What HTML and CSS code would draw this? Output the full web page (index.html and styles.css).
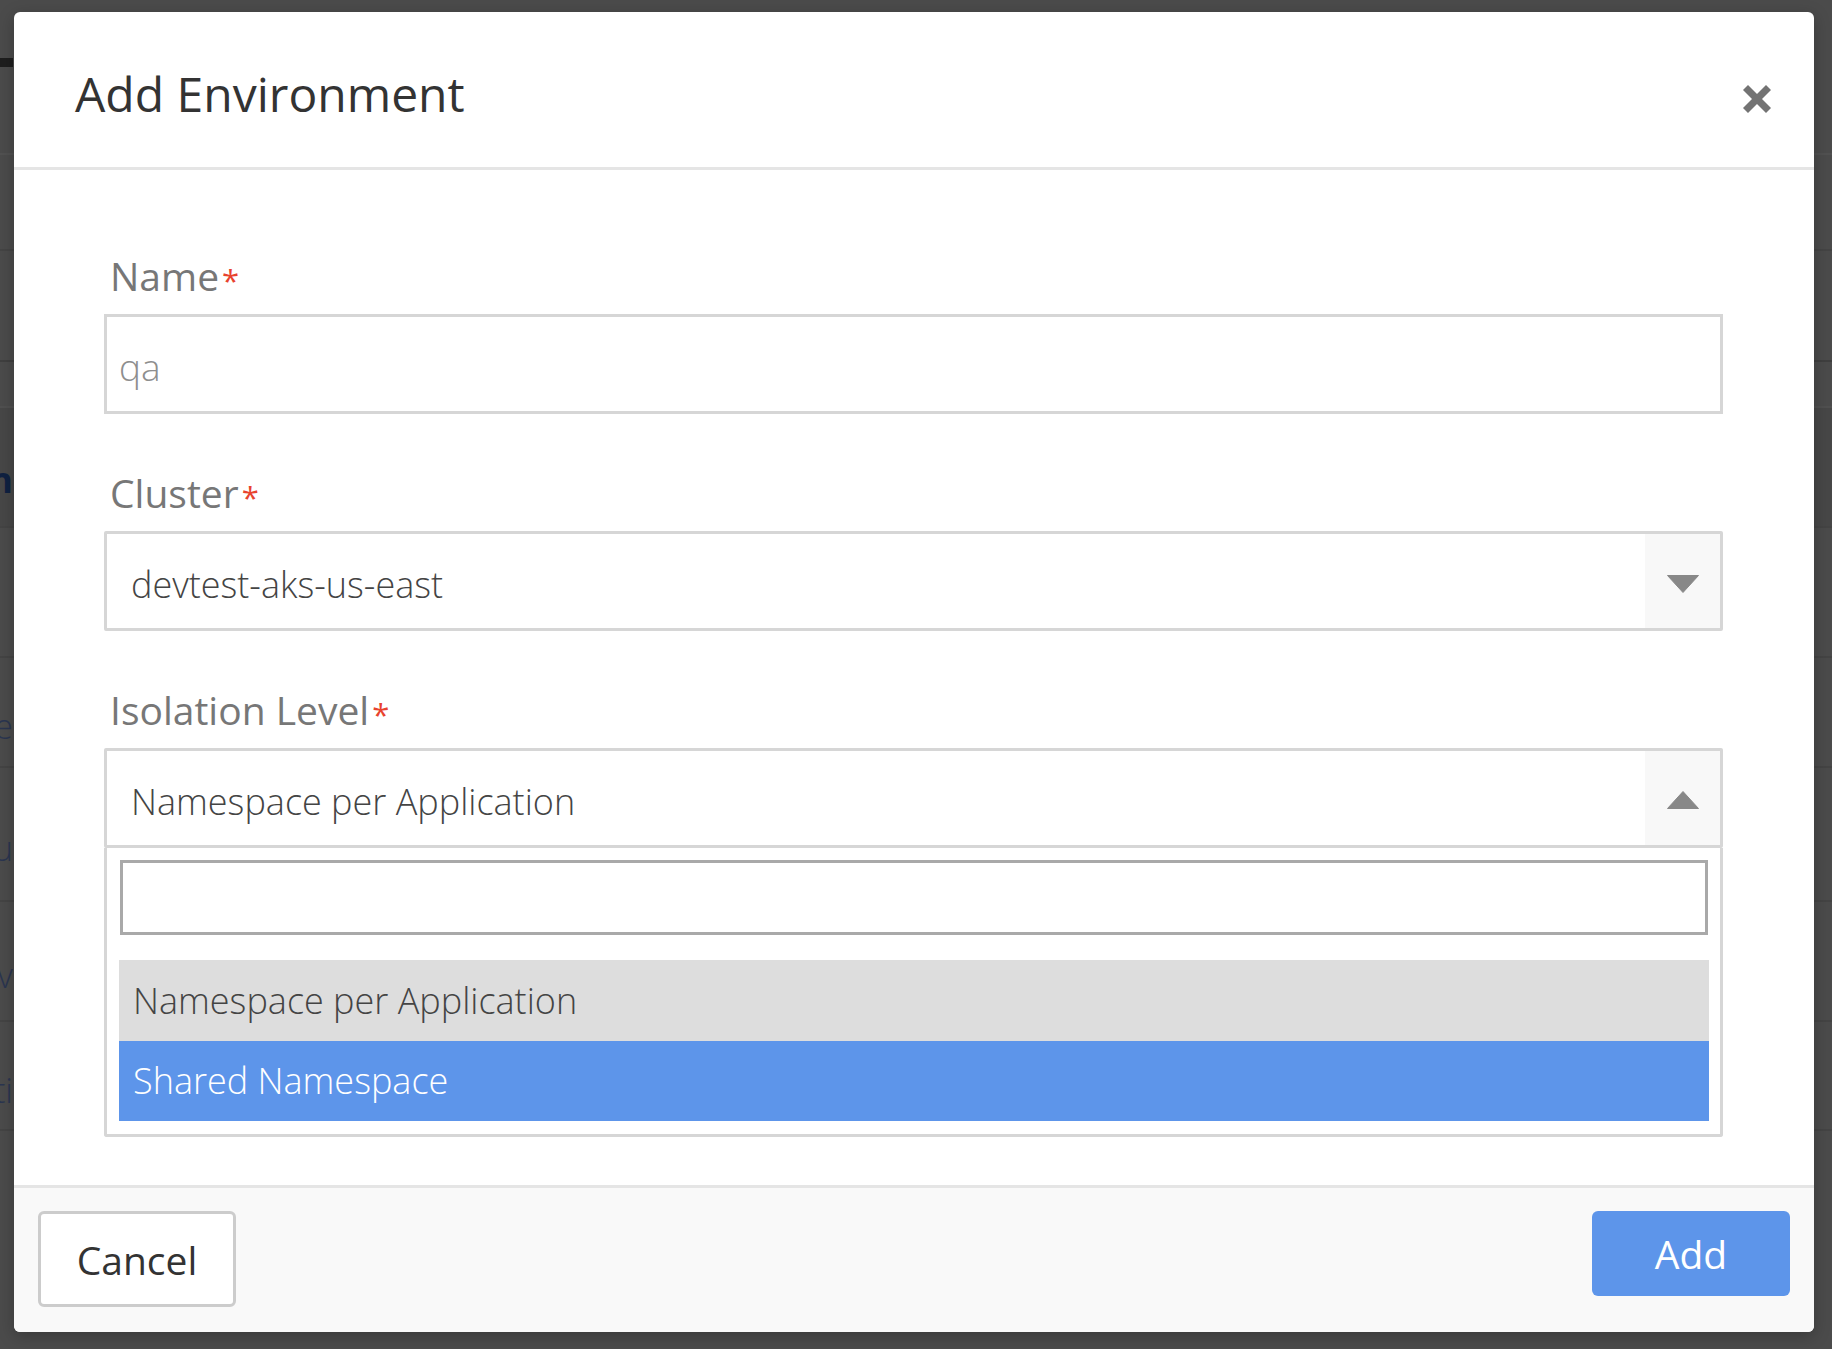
FILE: index.html
```html
<!DOCTYPE html>
<html lang="en">
<head>
<meta charset="utf-8">
<title>Add Environment</title>
<link rel="stylesheet" href="styles.css">
</head>
<body>
<div class="page">
  <div class="row row-top"><div class="frag frag-top"><span class="logo-edge"></span></div></div>
  <div class="row row-a"><div class="frag"></div></div>
  <div class="row row-b"><div class="frag"></div></div>
  <div class="row row-c"><div class="frag"></div></div>
  <div class="row row-d"><div class="frag frag-bold">Environmen</div></div>
  <div class="row row-e"><div class="frag"></div></div>
  <div class="row row-f"><div class="frag">Name</div></div>
  <div class="row row-g"><div class="frag">devtest-aks-u</div></div>
  <div class="row row-h"><div class="frag">Shared Namespace per Applicv</div></div>
  <div class="row row-i"><div class="frag">Isolati</div></div>
  <div class="row row-j"><div class="frag"></div></div>
</div>

<div class="modal" role="dialog" aria-labelledby="modal-title">
  <div class="modal-header">
    <h2 class="modal-title" id="modal-title">Add Environment</h2>
    <button class="close-btn" type="button" aria-label="Close">
      <svg width="28" height="28" viewBox="0 0 28 28" aria-hidden="true">
        <line x1="2.5" y1="2.5" x2="25.5" y2="25.5" stroke="#737373" stroke-width="7"/>
        <line x1="25.5" y1="2.5" x2="2.5" y2="25.5" stroke="#737373" stroke-width="7"/>
      </svg>
    </button>
  </div>

  <div class="modal-body">
    <div class="form-group">
      <label class="field-label">Name<span class="req">*</span></label>
      <div class="text-input">qa</div>
    </div>

    <div class="form-group">
      <label class="field-label">Cluster<span class="req">*</span></label>
      <div class="select">
        <div class="select-value">devtest-aks-us-east</div>
        <div class="select-arrow">
          <svg width="32" height="18" viewBox="0 0 32 18" aria-hidden="true"><polygon points="0.5,0.5 31.5,0.5 16,17.5" fill="#888" stroke="#888" stroke-width="1" stroke-linejoin="round"/></svg>
        </div>
      </div>
    </div>

    <div class="form-group last">
      <label class="field-label">Isolation Level<span class="req">*</span></label>
      <div class="select open">
        <div class="select-value">Namespace per Application</div>
        <div class="select-arrow">
          <svg width="32" height="18" viewBox="0 0 32 18" aria-hidden="true"><polygon points="0.5,17.5 31.5,17.5 16,0.5" fill="#888" stroke="#888" stroke-width="1" stroke-linejoin="round"/></svg>
        </div>
      </div>
      <div class="dropdown">
        <div class="dropdown-search"></div>
        <ul class="options">
          <li class="option option-selected">Namespace per Application</li>
          <li class="option option-highlight">Shared Namespace</li>
        </ul>
      </div>
    </div>
  </div>

  <div class="modal-footer">
    <button class="btn btn-cancel" type="button">Cancel</button>
    <button class="btn btn-add" type="button">Add</button>
  </div>
</div>
</body>
</html>
```

FILE: styles.css
```css
* {
  box-sizing: border-box;
}

html,
body {
  margin: 0;
  padding: 0;
}

body {
  width: 1832px;
  height: 1349px;
  overflow: hidden;
  position: relative;
  background: #4b4b4b;
  font-family: "Open Sans", "Noto Sans", "Liberation Sans", sans-serif;
}

/* dimmed page behind the dialog */
.page {
  display: flex;
  flex-direction: column;
}

.row {
  display: flex;
  align-items: center;
  border-bottom: 2px solid #444;
}

.row-top { height: 155px; align-items: flex-start; border-bottom-color: #515151; }
.row-a { height: 96px; }
.row-b { height: 111px; border-bottom-color: #3f3f3f; }
.row-c { height: 46px; border-bottom-color: #505050; }
.row-d { height: 120px; background: #474747; }
.row-e { height: 130px; }
.row-f { height: 110px; }
.row-g { height: 134px; }
.row-h { height: 120px; }
.row-i { height: 109px; }
.row-j { height: 200px; border-bottom: none; }

.frag {
  width: 13px;
  overflow: hidden;
  display: flex;
  justify-content: flex-end;
  white-space: nowrap;
  padding-top: 28px;
  color: #2a3550;
  font-size: 34px;
  font-weight: 300;
}

.frag-top {
  padding-top: 0;
}

.frag-bold {
  padding-top: 24px;
  color: #0f2141;
  font-weight: 700;
  font-size: 36px;
}

.logo-edge {
  display: block;
  width: 40px;
  height: 9px;
  margin-top: 58px;
  border-radius: 6px 0 0 0;
  background: #1e1e1e;
  flex-shrink: 0;
}

/* dialog */
.modal {
  position: absolute;
  left: 14px;
  top: 12px;
  width: 1800px;
  background: #fff;
  border-radius: 6px;
  overflow: hidden;
  box-shadow: 0 4px 16px rgba(0, 0, 0, 0.25);
}

.modal-header {
  display: flex;
  justify-content: space-between;
  align-items: flex-start;
  padding: 52px 43px 43px 61px;
  border-bottom: 3px solid #e5e5e5;
}

.modal-title {
  margin: 0;
  font-size: 48px;
  line-height: 60px;
  font-weight: 400;
  color: #333;
}

.close-btn {
  margin: 21px 0 0 0;
  padding: 0;
  width: 28px;
  height: 28px;
  border: none;
  background: none;
  display: block;
}

.close-btn svg {
  display: block;
}

.modal-body {
  padding: 79px 91px 48px 90px;
}

.form-group {
  margin-bottom: 52px;
}

.form-group.last {
  margin-bottom: 0;
}

.field-label {
  display: block;
  height: 54px;
  padding-left: 6px;
  margin-bottom: 11px;
  font-size: 39px;
  line-height: 54px;
  font-weight: 400;
  color: #777;
}

.req {
  color: #e8432e;
  font-size: 31px;
  line-height: 0;
  margin-left: 3px;
  position: relative;
  top: 1px;
}

.text-input {
  height: 100px;
  border: 3px solid #d6d6d6;
  padding: 6px 12px 0;
  font-size: 37px;
  line-height: 88px;
  font-weight: 300;
  color: #8e8e8e;
}

.select {
  display: flex;
  height: 100px;
  border: 3px solid #d6d6d6;
  border-radius: 2px;
}

.select-value {
  flex: 1;
  padding: 8px 0 0 24px;
  font-size: 36px;
  line-height: 86px;
  font-weight: 300;
  color: #444;
}

.select-arrow {
  width: 75px;
  background: #f8f8f8;
  display: flex;
  align-items: center;
  justify-content: center;
  padding-top: 6px;
}

.select.open .select-arrow {
  padding-top: 4px;
}

.select-arrow svg {
  display: block;
}

.dropdown {
  border: 3px solid #d6d6d6;
  border-top: none;
  border-radius: 0 0 3px 3px;
  padding: 12px 11px 13px 12px;
}

.dropdown-search {
  height: 75px;
  margin: 0 1px 25px 1px;
  border: 3px solid #a9a9a9;
  background: #fff;
}

.options {
  list-style: none;
  margin: 0;
  padding: 0;
}

.option {
  height: 80px;
  padding-left: 14px;
  font-size: 36px;
  line-height: 80px;
  font-weight: 300;
}

.option-selected {
  height: 81px;
  line-height: 81px;
  background: #dddddd;
  color: #444;
}

.option-highlight {
  background: #5d95ea;
  color: #fff;
}

.modal-footer {
  display: flex;
  justify-content: space-between;
  align-items: flex-start;
  padding: 23px 24px 25px 24px;
  background: #f9f9f9;
  border-top: 3px solid #e5e5e5;
}

.btn {
  width: 198px;
  font-family: "Open Sans", "Noto Sans", "Liberation Sans", sans-serif;
  font-size: 39px;
  font-weight: 400;
  border-radius: 6px;
  padding: 0;
  cursor: pointer;
}

.btn-cancel {
  height: 96px;
  border: 3px solid #cccccc;
  background: #fff;
  color: #333;
}

.btn-add {
  height: 85px;
  border: none;
  background: #5d95ea;
  color: #fff;
}
```
